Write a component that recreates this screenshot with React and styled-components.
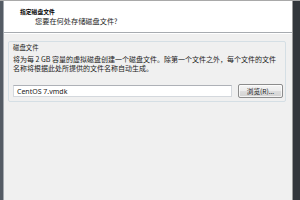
import React from "react";
import styled, { createGlobalStyle } from "styled-components";

const Global = createGlobalStyle`
  html, body { margin: 0; padding: 0; background: #f0f0f0; }
  body { width: 300px; height: 200px; overflow: hidden; }
  #root { width: 300px; height: 200px; }
`;

const Window = styled.div`
  display: flex;
  width: 300px;
  height: 200px;
  border-top: 1px solid #a9a9a9;
  box-sizing: border-box;
  font-family: "Noto Sans", "Noto Sans CJK SC", sans-serif;
  color: #1b1b1b;
`;

const LeftFrame = styled.div`
  width: 3px;
  background: #545b64;
  border-right: 1px solid #a3a8ae;
  flex: none;
`;

const RightFrame = styled.div`
  width: 7px;
  background: #33373c;
  border-left: 1px solid #9b9b9b;
  flex: none;
`;

const Content = styled.div`
  flex: 1;
  display: flex;
  flex-direction: column;
  min-width: 0;
`;

const Header = styled.div`
  height: 31px;
  background: #ffffff;
  padding: 6px 0 0 16px;
  box-sizing: border-box;
  display: flex;
  flex-direction: column;
  flex: none;
`;

const Separator = styled.div`
  height: 1px;
  background: #a7abb0;
  border-bottom: 1px solid #ffffff;
  flex: none;
`;

const Title = styled.div`
  font-family: "Noto Sans CJK SC", sans-serif;
  font-weight: 700;
  font-size: 5.8px;
  line-height: 9px;
  color: #000;
`;

const Subtitle = styled.div`
  font-family: "Noto Sans CJK SC", sans-serif;
  font-size: 7.2px;
  line-height: 9px;
  margin: 1px 0 0 15px;
  color: #1b1b1b;
`;

const Body = styled.div`
  flex: 1;
  background: #f0f0f0;
  padding: 7px 6px 0 4px;
`;

const Group = styled.div`
  border: 1px solid #d5dfe5;
  border-radius: 2px;
  padding: 1px 1px 3px 4px;
  display: flex;
  flex-direction: column;
`;

const GroupLabel = styled.div`
  font-family: "Noto Sans CJK SC", sans-serif;
  font-size: 6.4px;
  line-height: 9px;
  color: #1b1b1b;
`;

const Description = styled.div`
  font-family: "Noto Sans CJK SC", sans-serif;
  font-size: 7px;
  line-height: 9px;
  margin-top: 3px;
  white-space: nowrap;
  color: #1b1b1b;
`;

const Row = styled.div`
  display: flex;
  align-items: center;
  gap: 6px;
  margin-top: 11px;
  height: 14px;
`;

const Input = styled.div`
  width: 219px;
  height: 12px;
  box-sizing: border-box;
  background: #ffffff;
  border: 1px solid #d4d8dd;
  border-top-color: #aeb1b7;
  display: flex;
  align-items: center;
  padding-left: 3px;
  font-size: 7px;
  color: #1b1b1b;
`;

const Button = styled.div`
  width: 45px;
  height: 14px;
  box-sizing: border-box;
  border: 1px solid #8c8c8c;
  border-radius: 2px;
  background: linear-gradient(#f4f4f4 0%, #ececec 48%, #dddddd 52%, #d2d2d2 100%);
  box-shadow: inset 0 0 0 1px rgba(255,255,255,0.7);
  display: flex;
  align-items: center;
  justify-content: center;
  font-family: "Noto Sans CJK SC", sans-serif;
  font-size: 6.6px;
  color: #1b1b1b;
`;

export default function App() {
  return (
    <>
      <Global />
      <Window>
        <LeftFrame />
        <Content>
          <Header>
            <Title>指定磁盘文件</Title>
            <Subtitle>您要在何处存储磁盘文件?</Subtitle>
          </Header>
          <Separator />
          <Body>
            <Group>
              <GroupLabel>磁盘文件</GroupLabel>
              <Description>
                将为每 2 GB 容量的虚拟磁盘创建一个磁盘文件。除第一个文件之外，每个文件的文件
                <br />
                名称将根据此处所提供的文件名称自动生成。
              </Description>
              <Row>
                <Input>CentOS 7.vmdk</Input>
                <Button>浏览(R)...</Button>
              </Row>
            </Group>
          </Body>
        </Content>
        <RightFrame />
      </Window>
    </>
  );
}
